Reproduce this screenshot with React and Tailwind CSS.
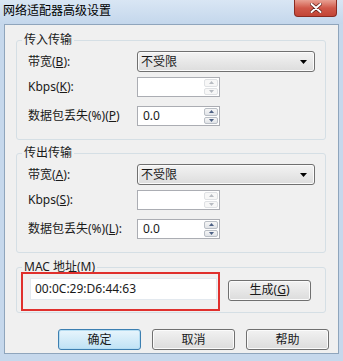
import React from 'react';

const font = { fontFamily: '"Noto Sans", "Noto Sans CJK SC", sans-serif' };

function Arrow({ up, color }) {
  return (
    <svg width="5" height="3" viewBox="0 0 5 3">
      <path d={up ? 'M0 3 L2.5 0 L5 3 Z' : 'M0 0 L2.5 3 L5 0 Z'} fill={color} />
    </svg>
  );
}

function Spin({ value, disabled }) {
  const c = disabled ? '#b8bcc2' : '#4d6185';
  return (
    <div className="w-[83px] h-[20px] flex border border-[#abadb3] bg-white">
      <div className="flex-1 pl-[5px] text-[12px] leading-[17px]">{value}</div>
      <div className="w-[16px] flex flex-col gap-[1px] p-[1px]">
        <div className={`flex-1 flex items-center justify-center rounded-[2px] border ${disabled ? 'border-[#dfe1e4] bg-[#f7f7f7]' : 'border-[#b9bec5] bg-gradient-to-b from-[#f6f6f6] to-[#e0e3e7]'}`}>
          <Arrow up color={c} />
        </div>
        <div className={`flex-1 flex items-center justify-center rounded-[2px] border ${disabled ? 'border-[#dfe1e4] bg-[#f7f7f7]' : 'border-[#b9bec5] bg-gradient-to-b from-[#f6f6f6] to-[#e0e3e7]'}`}>
          <Arrow color={c} />
        </div>
      </div>
    </div>
  );
}

function Select() {
  return (
    <div className="w-[178px] h-[21px] flex items-center justify-between rounded-[3px] border border-[#707070] bg-gradient-to-b from-[#f3f3f3] to-[#dddddd] pl-[3px] pr-[7px] shadow-[inset_0_0_0_1px_#fbfbfb]">
      <span className="text-[12px] leading-[16px]">不受限</span>
      <svg width="7" height="4" viewBox="0 0 7 4">
        <path d="M0 0 L7 0 L3.5 4 Z" fill="#000" />
      </svg>
    </div>
  );
}

function Group({ title, rows }) {
  return (
    <fieldset className="ml-[11px] w-[310px] rounded-[3px] border border-[#d5dfe5] p-0">
      <legend className="ml-[5px] px-[2px] text-[12px] leading-[14px]">{title}</legend>
      <div className="pl-[11px] pt-[4px] pb-[13px] flex flex-col">
        <div className="flex items-center">
          <span className="w-[109px] text-[12px]">{rows[0]}</span>
          <Select />
        </div>
        <div className="flex items-center mt-[5px]">
          <span className="w-[109px] text-[12px]">{rows[1]}</span>
          <Spin value="" disabled />
        </div>
        <div className="flex items-center mt-[9px]">
          <span className="w-[109px] text-[12px] whitespace-nowrap">{rows[2]}</span>
          <Spin value="0.0" />
        </div>
      </div>
    </fieldset>
  );
}

function Btn({ children, primary }) {
  return (
    <div
      className={`w-[83px] h-[21px] flex items-center justify-center rounded-[3px] border text-[12px] ${
        primary
          ? 'border-[#3c7fb1] bg-gradient-to-b from-[#e8f5fc] to-[#bfe2f5] shadow-[inset_0_0_0_1px_#b6ddf2]'
          : 'border-[#707070] bg-gradient-to-b from-[#f2f2f2] to-[#dcdcdc] shadow-[inset_0_0_0_1px_#fbfbfb]'
      }`}
    >
      {children}
    </div>
  );
}

export default function App() {
  return (
    <div className="w-[343px] h-[361px] flex flex-col overflow-hidden bg-[#c6d8ec] text-[#1a1a1a]" style={font}>
      <div className="h-[24px] flex justify-between bg-gradient-to-b from-[#d9e6f4] to-[#c4d7ec]">
        <div className="pl-[3px] pt-[3px] text-[12px] leading-[16px] text-black">网络适配器高级设置</div>
        <div className="mr-[6px] w-[43px] h-[17px] flex items-center justify-center rounded-b-[4px] border border-t-0 border-[#8a2b21] bg-gradient-to-b from-[#e8a093] via-[#d0584a] to-[#c24536]">
          <svg width="12" height="10" viewBox="0 0 12 10">
            <path d="M1.5 1 L10.5 9 M10.5 1 L1.5 9" stroke="#5a1a14" strokeWidth="3.4" strokeLinecap="round" />
            <path d="M1.5 1 L10.5 9 M10.5 1 L1.5 9" stroke="#fff" strokeWidth="2" strokeLinecap="round" />
          </svg>
        </div>
      </div>
      <div className="mx-[4px] h-[330px] border border-[#8fa5bc] bg-[#f0f0f0] flex flex-col">
        <div className="mt-[8px]">
          <Group
            title="传入传输"
            rows={[
              <>带宽(<u>B</u>):</>,
              <>Kbps(<u>K</u>):</>,
              <>数据包丢失(%)(<u>P</u>)</>,
            ]}
          />
        </div>
        <div className="mt-[6px]">
          <Group
            title="传出传输"
            rows={[
              <>带宽(<u>A</u>):</>,
              <>Kbps(<u>S</u>):</>,
              <>数据包丢失(%)(<u>L</u>):</>,
            ]}
          />
        </div>
        <fieldset className="mt-[7px] ml-[11px] w-[310px] rounded-[3px] border border-[#d5dfe5] p-0">
          <legend className="ml-[5px] px-[2px] text-[12px] leading-[14px]">MAC 地址(M)</legend>
          <div className="flex items-center -mt-[2px] pl-[4px] pb-[1px]">
            <div className="w-[199px] border-2 border-[#e0302d] pl-[7px] pr-[1px] pt-[4px] pb-[9px]">
              <div className="h-[22px] bg-white border border-[#e3e9ef] pl-[4px] text-[12px] leading-[20px]">
                00:0C:29:D6:44:63
              </div>
            </div>
            <div className="ml-[8px] mt-[-3px]">
              <Btn>生成(<u>G</u>)</Btn>
            </div>
          </div>
        </fieldset>
        <div className="mt-[16px] ml-[53px] flex gap-[11px]">
          <Btn primary>确定</Btn>
          <Btn>取消</Btn>
          <Btn>帮助</Btn>
        </div>
      </div>
    </div>
  );
}
